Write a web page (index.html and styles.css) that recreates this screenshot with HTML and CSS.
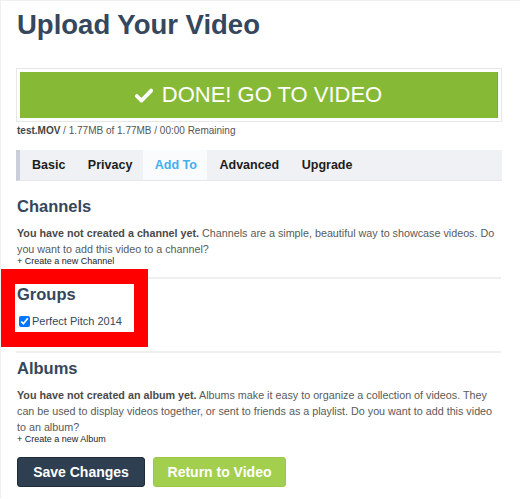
FILE: index.html
```html
<!DOCTYPE html>
<html>
<head>
<meta charset="utf-8">
<link rel="stylesheet" href="styles.css">
</head>
<body>
<div class="page">
  <h1 class="title">Upload Your Video</h1>
  <div class="done-frame">
    <div class="done-btn">
      <svg class="check" width="18" height="15" viewBox="0 0 18 15"><path d="M1.8 8 L6.5 12.6 L16.2 2.6" fill="none" stroke="#fff" stroke-width="3.8" stroke-linecap="round" stroke-linejoin="round"/></svg>
      <span>DONE! GO TO VIDEO</span>
    </div>
  </div>
  <div class="status"><b>test.MOV</b> / 1.77MB of 1.77MB / 00:00 Remaining</div>
  <div class="tabs">
    <span class="tab">Basic</span>
    <span class="tab">Privacy</span>
    <span class="tab active">Add To</span>
    <span class="tab">Advanced</span>
    <span class="tab">Upgrade</span>
  </div>
  <section class="sec first">
    <h2 class="sec-title">Channels</h2>
    <p class="desc"><b>You have not created a channel yet.</b> Channels are a simple, beautiful way to showcase videos. Do you want to add this video to a channel?</p>
    <div class="create">+ Create a new Channel</div>
  </section>
  <div class="sep"></div>
  <section class="sec groups">
    <h2 class="sec-title">Groups</h2>
    <label class="check-row"><input type="checkbox" checked> Perfect Pitch 2014</label>
  </section>
  <div class="sep"></div>
  <section class="sec">
    <h2 class="sec-title">Albums</h2>
    <p class="desc"><b>You have not created an album yet.</b> Albums make it easy to organize a collection of videos. They<br>can be used to display videos together, or sent to friends as a playlist. Do you want to add this video to an album?</p>
    <div class="create">+ Create a new Album</div>
  </section>
  <div class="actions">
    <button class="btn save">Save Changes</button>
    <button class="btn ret">Return to Video</button>
  </div>
  <div class="annot"></div>
</div>
</body>
</html>
```
FILE: styles.css
```css
html, body { margin: 0; padding: 0; background: #fff; }
body {
  font-family: "Liberation Sans", Arial, Helvetica, sans-serif;
  border-top: 1px solid #f0f0f0;
  border-left: 1px solid #f0f0f0;
  min-height: 498px;
  box-sizing: border-box;
}
.page {
  position: relative;
  width: 486px;
  padding: 7px 0 0 15px;
}
.title {
  margin: 0 0 0 1px;
  font-size: 27.5px;
  line-height: 34px;
  font-weight: bold;
  color: #34475c;
}
.done-frame {
  margin-top: 26px;
  border: 1px solid #e7e7e7;
  padding: 3px;
}
.done-btn {
  height: 46px;
  background: #86b936;
  border-right: 1px solid #79ad2a;
  display: flex;
  align-items: center;
  justify-content: center;
  gap: 9px;
  color: #fff;
  font-size: 22px;
  font-family: "Liberation Sans", Arial, sans-serif;
}
.check { display: block; margin-top: 1px; }
.status {
  margin: 3px 0 0 1px;
  font-size: 10px;
  line-height: 12px;
  color: #555;
}
.status b { color: #444; }
.tabs {
  margin-top: 13px;
  height: 31px;
  background: #eff1f4;
  border-left: 4px solid #c9ceda;
  border-bottom: 1px solid #e6e8ec;
  box-sizing: border-box;
  display: flex;
  padding-left: 0;
}
.tab {
  padding: 0 10.5px 0 12px;
  line-height: 30px;
  font-size: 12.5px;
  font-weight: bold;
  color: #1d1d1d;
}
.tab.active {
  background: #fafbfc;
  color: #44aef2;
}
.sec { padding-left: 1px; }
.sec-title {
  margin: 0;
  font-size: 16.5px;
  line-height: 20px;
  font-weight: bold;
  color: #34475c;
}
.sec.first .sec-title { margin-top: 15px; }
.sep + .sec .sec-title { margin-top: 5px; }
.desc {
  margin: 9px 0 0;
  font-size: 10.75px;
  line-height: 16px;
  color: #5a5a5a;
}
.desc b { color: #4a4a4a; }
.create {
  margin-top: -1px;
  font-size: 9px;
  line-height: 11px;
  color: #1d1d1d;
}
.sep {
  margin-top: 10px;
  height: 2px;
  background: #efefef;
  width: 485px;
}
.groups { padding-bottom: 13px; }
.check-row {
  display: flex;
  align-items: center;
  margin-top: 10px;
  font-size: 11px;
  color: #34475c;
  line-height: 14px;
}
.check-row input {
  margin: 0 2px 0 2px;
  width: 11px;
  height: 11px;
}
.actions {
  display: flex;
  gap: 8px;
  margin-top: 12px;
  padding-left: 1px;
}
.btn {
  height: 30px;
  border-radius: 3px;
  font-family: "Liberation Sans", Arial, sans-serif;
  font-size: 14px;
  font-weight: bold;
  color: #fff;
  padding: 0;
  cursor: pointer;
}
.save {
  width: 128px;
  background: #2e3f51;
  border: 1px solid #1f2c39;
}
.ret {
  width: 133px;
  background: #a3cf4f;
  border: 1px solid #9ac745;
}
.annot {
  position: absolute;
  left: -1px;
  top: 268px;
  width: 119px;
  height: 48px;
  border: 15px solid #ff0000;
  border-right-width: 14px;
  pointer-events: none;
}
```
